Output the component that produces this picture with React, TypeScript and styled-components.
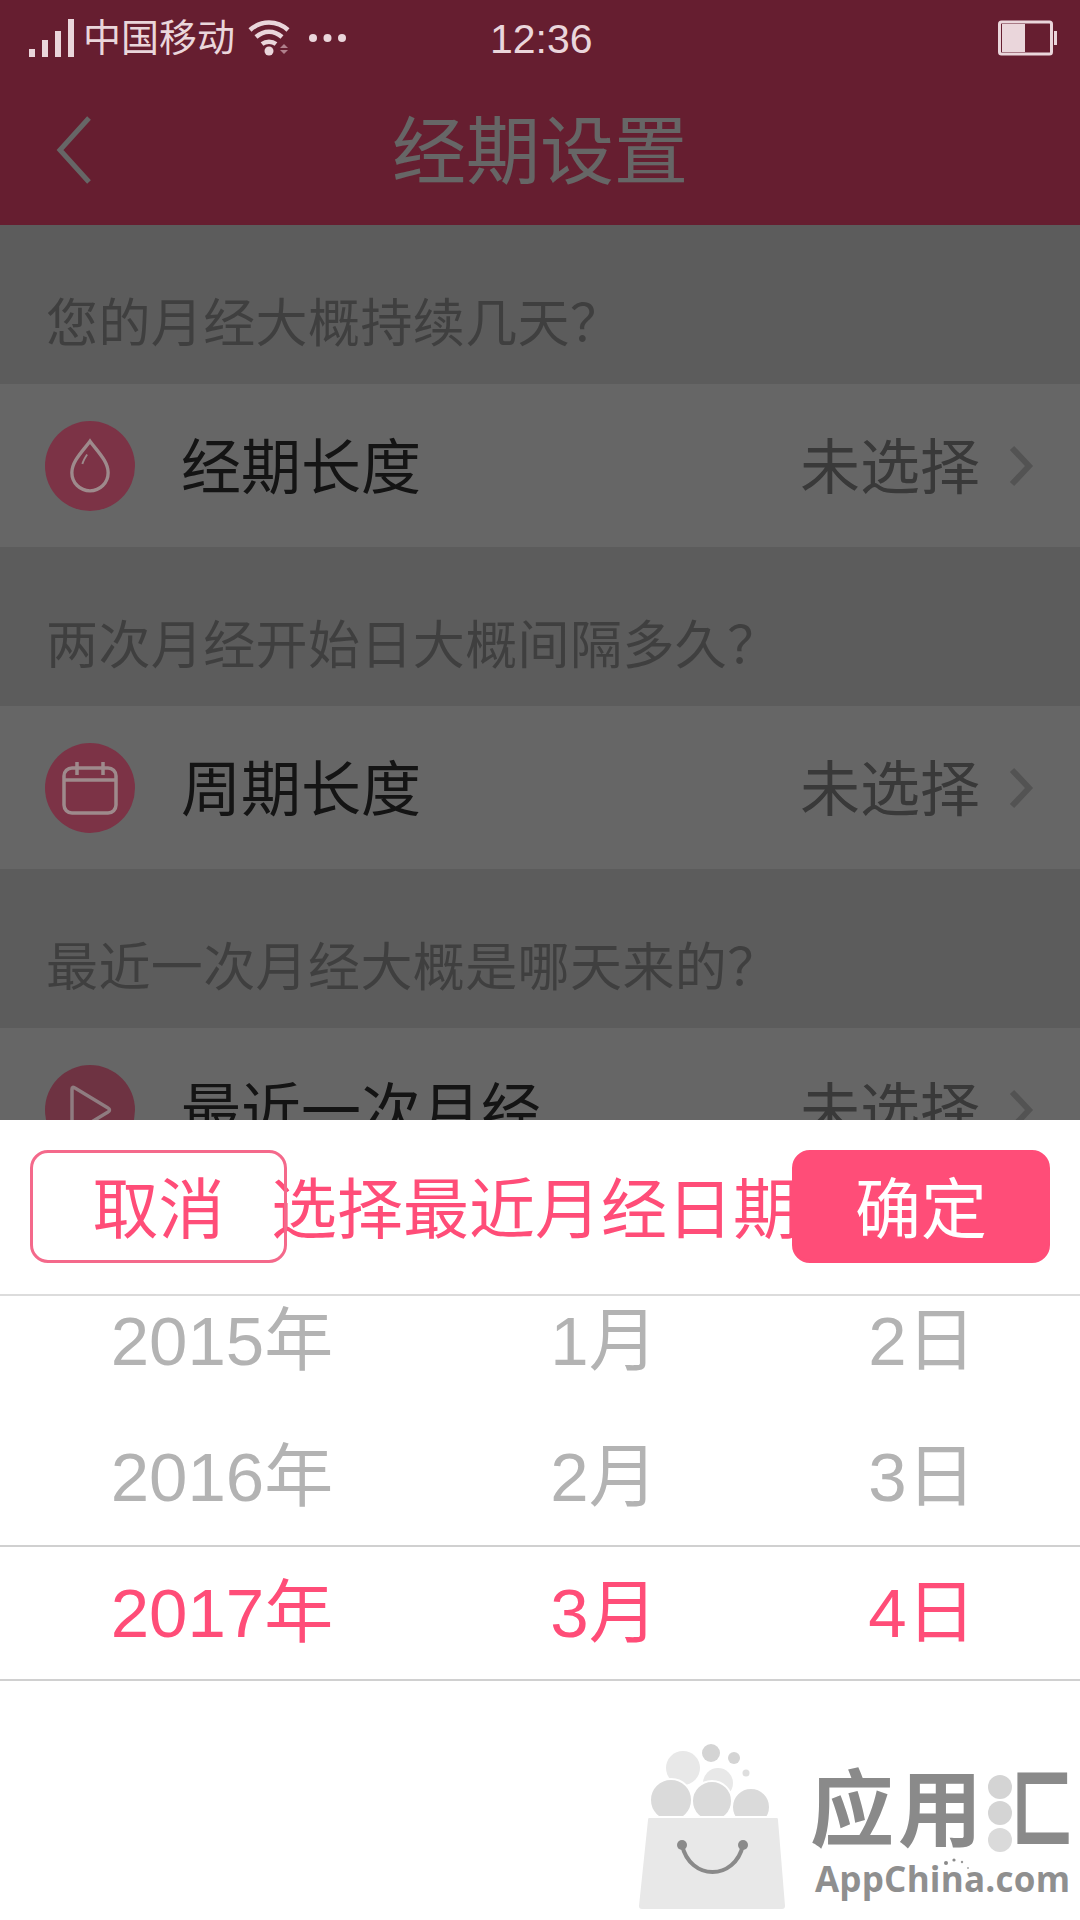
import styled, { createGlobalStyle } from 'styled-components';

const GlobalStyle = createGlobalStyle`
  html, body {
    margin: 0;
    padding: 0;
    background: #fff;
  }

  body {
    font-family: 'Noto Sans CJK SC', 'Liberation Sans', sans-serif;
  }
`;

const Page = styled.div`
  position: relative;
  width: 1080px;
  height: 1920px;
  overflow: hidden;
  background: #e6e6e6;
`;

const Header = styled.header`
  height: 225px;
  background: #ff4d78;
`;

const StatusBar = styled.div`
  position: relative;
  z-index: 2;
  display: flex;
  align-items: center;
  height: 75px;
  padding: 0 22px 0 29px;
  color: #ead6db;
`;

const Carrier = styled.span`
  margin: 0 0 5px 8px;
  font-size: 38px;
  line-height: 1;
`;

const Wifi = styled.svg`
  margin-left: 12px;
  width: 46px;
  height: 36px;
`;

const Dots = styled.svg`
  margin-left: 15px;
  width: 39px;
  height: 12px;
`;

const Time = styled.span`
  position: absolute;
  left: 490px;
  top: 18px;
  font-family: 'Liberation Sans', sans-serif;
  font-size: 41px;
  line-height: 42px;
`;

const Battery = styled.svg`
  margin-left: auto;
  width: 60px;
  height: 36px;
`;

const NavBar = styled.div`
  position: relative;
  display: flex;
  align-items: center;
  justify-content: center;
  height: 150px;
  padding-bottom: 8px;
  box-sizing: border-box;
`;

const BackIcon = styled.svg`
  position: absolute;
  left: 54px;
  top: 39px;
  width: 40px;
  height: 72px;
`;

const Title = styled.h1`
  margin: 0;
  color: #fff;
  font-size: 74px;
  font-weight: 400;
  line-height: 1;
`;

const SectionLabel = styled.div`
  display: flex;
  align-items: center;
  height: 159px;
  padding: 30px 0 0 46px;
  box-sizing: border-box;
  color: #9f9f9f;
  font-size: 52px;
  letter-spacing: 0.4px;
`;

const Row = styled.div`
  display: flex;
  align-items: center;
  height: 163px;
  padding: 0 46px 0 45px;
  box-sizing: border-box;
  background: #fff;
`;

const RowIcon = styled.div<{ $muted?: boolean }>`
  position: relative;
  z-index: 2;
  display: flex;
  align-items: center;
  justify-content: center;
  width: 90px;
  height: 90px;
  border-radius: 50%;
  background: ${({ $muted }) => ($muted ? '#6e3342' : '#7c3346')};
  color: ${({ $muted }) => ($muted ? '#8f7c80' : '#9e8a8c')};
`;

const RowName = styled.span`
  margin: 0 0 6px 46px;
  color: #333;
  font-size: 60px;
`;

const RowValue = styled.span`
  margin: 0 0 6px auto;
  color: #8e8e8e;
  font-size: 60px;
`;

const RowArrow = styled.svg`
  margin-left: 28px;
  width: 26px;
  height: 42px;
`;

const Scrim = styled.div`
  position: absolute;
  inset: 0;
  z-index: 1;
  background: rgba(0, 0, 0, 0.6);
`;

const Sheet = styled.section`
  position: absolute;
  left: 0;
  right: 0;
  bottom: 0;
  z-index: 3;
  height: 800px;
  background: #fff;
`;

const SheetBar = styled.div`
  display: flex;
  align-items: center;
  height: 176px;
  padding: 0 30px 2px;
  box-sizing: border-box;
  border-bottom: 2px solid #dcdcdc;
`;

const SheetButton = styled.button<{ $primary?: boolean }>`
  position: relative;
  z-index: ${({ $primary }) => ($primary ? 1 : 0)};
  flex: none;
  width: ${({ $primary }) => ($primary ? '258px' : '257px')};
  height: 113px;
  padding: 0 0 4px;
  box-sizing: border-box;
  border: 3px solid ${({ $primary }) => ($primary ? '#ff4d78' : '#f4698b')};
  border-radius: 18px;
  background: ${({ $primary }) => ($primary ? '#ff4d78' : 'transparent')};
  color: ${({ $primary }) => ($primary ? '#fff' : '#ff4d78')};
  font-family: inherit;
  font-size: 66px;
`;

const SheetTitle = styled.div`
  flex: 1;
  min-width: 0;
  margin: 0 0 4px -16px;
  color: #ff4d78;
  font-size: 66px;
  white-space: nowrap;
`;

const Picker = styled.div`
  height: 622px;
  overflow: hidden;
`;

const PickerRow = styled.div<{ $selected?: boolean }>`
  display: grid;
  grid-template-columns: 444px 320px 316px;
  align-items: center;
  height: 136px;
  padding-bottom: 12px;
  box-sizing: border-box;
  border-top: ${({ $selected }) => ($selected ? '2px solid #d0d0d0' : 'none')};
  border-bottom: ${({ $selected }) => ($selected ? '2px solid #d0d0d0' : 'none')};
  color: ${({ $selected }) => ($selected ? '#ff4d78' : '#b3b3b3')};
  font-family: 'Liberation Sans', 'Noto Sans CJK SC', sans-serif;
  font-size: 69px;
  text-align: center;

  &:first-child {
    margin-top: -23px;
  }
`;

const Watermark = styled.svg`
  position: absolute;
  right: 0;
  bottom: 0;
  width: 460px;
  height: 200px;
`;

const sections = [
  { label: '您的月经大概持续几天？', name: '经期长度', icon: 'drop' },
  { label: '两次月经开始日大概间隔多久？', name: '周期长度', icon: 'calendar' },
  { label: '最近一次月经大概是哪天来的？', name: '最近一次月经', icon: 'play' },
];

const pickerRows = [
  ['2015年', '1月', '2日'],
  ['2016年', '2月', '3日'],
  ['2017年', '3月', '4日'],
];

function SectionIcon({ kind }: { kind: string }) {
  if (kind === 'drop') {
    return (
      <svg width='42' height='56' viewBox='0 0 44 58' fill='none' stroke='currentColor' strokeWidth='3.5'>
        <path d='M22 3C14 14 3 24 3 36a19 19 0 0 0 38 0C41 24 30 14 22 3Z' />
        <path d='M14 27c1-4 3-7 5-10' strokeWidth='2' />
      </svg>
    );
  }
  if (kind === 'calendar') {
    return (
      <svg width='58' height='56' viewBox='0 0 58 56' fill='none' stroke='currentColor' strokeWidth='3.5'>
        <rect x='3' y='8' width='52' height='45' rx='8' />
        <path d='M3 20h52M16 2v13M42 2v13' />
      </svg>
    );
  }
  return (
    <svg width='44' height='50' viewBox='0 0 44 50' fill='none' stroke='currentColor' strokeWidth='3.5'>
      <path d='M4 4v42c0 2 1 2 3 1l33-20c2-1 2-3 0-4L7 3C5 2 4 2 4 4Z' />
    </svg>
  );
}

function AppChinaLogo() {
  return (
    <Watermark viewBox='0 0 460 200'>
      <g fill='#e8e8e8'>
        <circle cx='63' cy='48' r='17' />
        <circle cx='98' cy='63' r='15' />
      </g>
      <g fill='#dadada' stroke='#fff' strokeWidth='2'>
        <circle cx='51' cy='80' r='21' />
        <circle cx='92' cy='81' r='20' />
        <circle cx='131' cy='87' r='19' />
      </g>
      <circle cx='91' cy='33' r='9' fill='#d4d4d4' />
      <circle cx='114' cy='38' r='6' fill='#d4d4d4' />
      <circle cx='126' cy='53' r='3.5' fill='#dedede' />
      <path
        d='M29 97h128q2 0 2 3l7 86q0 4-4 4H22q-4 0-4-4l9-86q0-3 2-3Z'
        fill='#e8e8e8'
        stroke='#fff'
        strokeWidth='2'
      />
      <path d='M62 125c8 36 53 36 61 0' fill='none' stroke='#8a8a8a' strokeWidth='4' />
      <circle cx='62' cy='125' r='5' fill='#8a8a8a' />
      <circle cx='123' cy='125' r='5' fill='#8a8a8a' />
      <g fill='#8a8a8a' fontFamily="'Noto Sans CJK SC', sans-serif" fontWeight='700' fontSize='84'>
        <text x='190' y='120' letterSpacing='4'>
          应用
        </text>
        <text transform='translate(392 120) scale(0.72 1)' stroke='#8a8a8a' strokeWidth='2'>
          匚
        </text>
      </g>
      <circle cx='380' cy='67' r='12' fill='#d4d4d4' />
      <circle cx='380' cy='93' r='12' fill='#d4d4d4' />
      <circle cx='380' cy='120' r='12' fill='#dadada' />
      <text x='195' y='172' fill='#8f8f8f' fontFamily="'Open Sans', sans-serif" fontWeight='700' fontSize='35' textLength='255'>
        AppChina.com
      </text>
      <circle cx='326' cy='143' r='2' fill='#8a8a8a' />
      <circle cx='334' cy='140' r='1.6' fill='#8a8a8a' />
      <circle cx='342' cy='142' r='1.2' fill='#999' />
      <circle cx='348' cy='148' r='1' fill='#aaa' />
    </Watermark>
  );
}

export default function App() {
  return (
    <Page>
      <GlobalStyle />
      <Header>
        <StatusBar>
          <svg width='46' height='38' viewBox='0 0 46 38' fill='currentColor'>
            <rect x='0' y='30' width='6' height='8' />
            <rect x='13' y='21' width='6' height='17' />
            <rect x='26' y='12' width='6' height='26' />
            <rect x='39' y='0' width='6' height='38' />
          </svg>
          <Carrier>中国移动</Carrier>
          <Wifi viewBox='0 0 46 36' fill='none' stroke='currentColor' strokeWidth='4.5'>
            <path d='M3 10c11-10 27-10 38 0' />
            <path d='M9 17c8-7 18-7 26 0' />
            <path d='M15 24c4-3 10-3 14 0' />
            <circle cx='22' cy='31' r='4.5' fill='currentColor' stroke='none' />
            <path d='M37 24l4 4h-8ZM33 30h8l-4 4Z' fill='#b0808c' stroke='none' />
          </Wifi>
          <Dots viewBox='0 0 39 12' fill='currentColor'>
            <circle cx='5' cy='6' r='4' />
            <circle cx='19.5' cy='6' r='4' />
            <circle cx='34' cy='6' r='4' />
          </Dots>
          <Time>12:36</Time>
          <Battery viewBox='0 0 60 36' fill='none' stroke='currentColor'>
            <rect x='1.5' y='2' width='52' height='32' rx='2' strokeWidth='3' />
            <rect x='4' y='4' width='23' height='28' fill='currentColor' stroke='none' />
            <rect x='56' y='11' width='3' height='14' fill='currentColor' stroke='none' />
          </Battery>
        </StatusBar>
        <NavBar>
          <BackIcon viewBox='0 0 40 72' fill='none' stroke='#fff' strokeWidth='5'>
            <path d='M35 4 6 36l29 32' />
          </BackIcon>
          <Title>经期设置</Title>
        </NavBar>
      </Header>

      {sections.map(({ label, name, icon }) => (
        <div key={name}>
          <SectionLabel>{label}</SectionLabel>
          <Row>
            <RowIcon $muted={icon === 'play'}>
              <SectionIcon kind={icon} />
            </RowIcon>
            <RowName>{name}</RowName>
            <RowValue>未选择</RowValue>
            <RowArrow viewBox='0 0 26 42' fill='none' stroke='#d0d0d0' strokeWidth='6'>
              <path d='M4 3l17 18L4 39' />
            </RowArrow>
          </Row>
        </div>
      ))}

      <Scrim />

      <Sheet>
        <SheetBar>
          <SheetButton type='button'>取消</SheetButton>
          <SheetTitle>选择最近月经日期</SheetTitle>
          <SheetButton type='button' $primary>
            确定
          </SheetButton>
        </SheetBar>
        <Picker>
          {pickerRows.map((row, index) => (
            <PickerRow key={row[0]} $selected={index === 2}>
              {row.map((cell) => (
                <span key={cell}>{cell}</span>
              ))}
            </PickerRow>
          ))}
        </Picker>
        <AppChinaLogo />
      </Sheet>
    </Page>
  );
}
